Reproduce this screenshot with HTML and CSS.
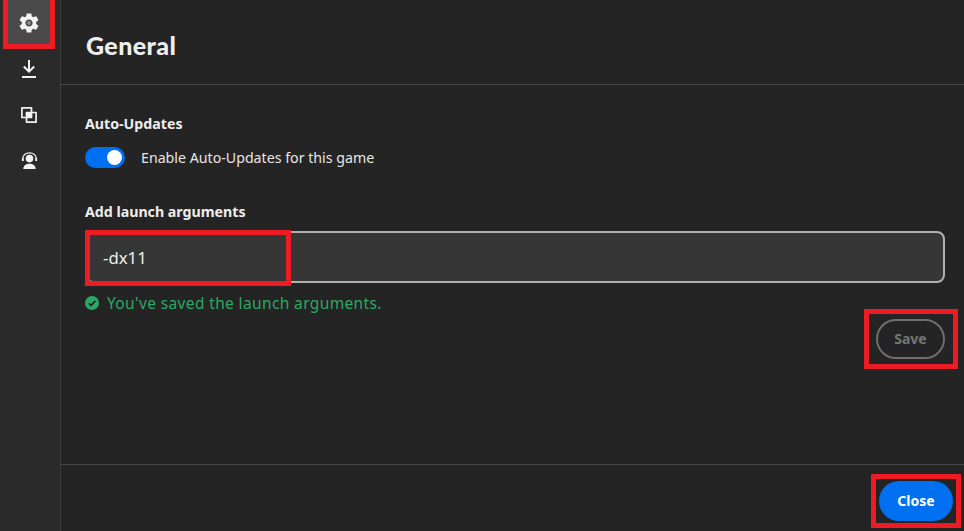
FILE: index.html
```html
<!DOCTYPE html>
<html lang="en">
<head>
<meta charset="utf-8">
<title>General</title>
<link rel="stylesheet" href="styles.css">
</head>
<body>
<div class="app">
  <nav class="sidebar">
    <div class="nav-item nav-item-active">
      <svg class="icon" viewBox="2 2 20 20"><path fill="#f2f2f2" d="M19.140 12.940c.04-.3.06-.61.06-.94 0-.32-.02-.64-.07-.94l2.030-1.580c.18-.14.23-.41.12-.61l-1.920-3.320c-.12-.22-.37-.29-.59-.22l-2.390.96c-.5-.38-1.030-.7-1.620-.94l-.36-2.540c-.04-.24-.24-.41-.48-.41h-3.840c-.24 0-.43.17-.47.41l-.36 2.540c-.59.24-1.130.57-1.620.94l-2.390-.96c-.22-.08-.47 0-.59.22L2.740 8.870c-.12.21-.08.47.12.61l2.030 1.580c-.05.3-.09.63-.09.94s.02.64.07.94l-2.030 1.580c-.18.14-.23.41-.12.61l1.920 3.320c.12.22.37.29.59.22l2.390-.96c.5.38 1.030.7 1.620.94l.36 2.540c.05.24.24.41.48.41h3.840c.24 0 .44-.17.47-.41l.36-2.540c.59-.24 1.130-.56 1.620-.94l2.390.96c.22.08.47 0 .59-.22l1.920-3.320c.12-.22.07-.47-.12-.61l-2.010-1.580zM12 15.600c-1.980 0-3.600-1.620-3.600-3.600s1.620-3.600 3.600-3.600 3.600 1.620 3.600 3.600-1.620 3.600-3.600 3.600z"/><circle cx="12" cy="12" r="2" fill="#8c8c8c"/></svg>
      <span class="mark mark-nav"></span>
    </div>
    <div class="nav-item">
      <svg class="icon" viewBox="0 0 20 20"><path fill="none" stroke="#f2f2f2" stroke-width="2" d="M10 1v11M4.800 7.500 10 12.700l5.200-5.200M3 18h14"/></svg>
    </div>
    <div class="nav-item">
      <svg class="icon icon-layers" viewBox="0 0 16 16"><path fill="none" stroke="#f2f2f2" stroke-width="1.700" stroke-linejoin="round" d="M.9.9h9.600v9.600H.9zM5.500 5.500h9.600v9.600H5.500z"/><path fill="#f2f2f2" d="M5.500 5.500h5v5h-5z"/></svg>
    </div>
    <div class="nav-item">
      <svg class="icon icon-agent" viewBox="0 0 20 20"><path fill="none" stroke="#f2f2f2" stroke-width="1.500" d="M2.800 8.500C3 4.500 6 2 10 2s7 2.500 7.200 6.500"/><circle cx="10" cy="8" r="4" fill="#f2f2f2"/><path fill="#f2f2f2" d="M2 7.500h2v3H2zM16 7.500h2v3h-2zM3.500 19c0-3.500 3-5.500 6.500-5.500s6.500 2 6.500 5.500z"/></svg>
    </div>
  </nav>
  <main class="panel">
    <header class="panel-header"><h1 class="title">General</h1></header>
    <section class="panel-body">
      <h2 class="label">Auto-Updates</h2>
      <div class="toggle-row">
        <span class="toggle"><span class="knob"></span></span>
        <span class="toggle-text">Enable Auto-Updates for this game</span>
      </div>
      <h2 class="label label-args">Add launch arguments</h2>
      <div class="field">
        <span class="field-text">-dx11</span>
        <span class="mark mark-field"></span>
      </div>
      <div class="status">
        <svg class="status-icon" viewBox="0 0 14 14"><circle cx="7" cy="7" r="7" fill="#2ba866"/><path fill="none" stroke="#222" stroke-width="1.600" d="M3.700 7.200l2.300 2.300 4.300-4.600"/></svg>
        <span>You've saved the launch arguments.</span>
      </div>
      <div class="save-row">
        <span class="btn btn-save">Save<span class="mark mark-save"></span></span>
      </div>
    </section>
    <footer class="panel-footer">
      <span class="btn btn-close">Close<span class="mark mark-close"></span></span>
    </footer>
  </main>
</div>
</body>
</html>
```
FILE: styles.css
```css
* { box-sizing: border-box; }
html, body { margin: 0; height: 100%; }
body { background: #242424; color: #f2f2f2; font-family: "Noto Sans", "Open Sans", sans-serif; overflow: hidden; }
.app { display: flex; height: 531px; }
.sidebar { width: 61px; flex: none; background: #2a2a2a; border-right: 1px solid #3d3d3d; display: flex; flex-direction: column; padding: 0 10px 0 8px; }
.nav-item { position: relative; height: 46px; display: flex; align-items: center; justify-content: center; }
.nav-item-active { background: #4a4a4a; height: 44px; margin-bottom: 2px; padding-top: 2px; }
.icon { width: 20px; height: 20px; display: block; }
.icon-layers { width: 16px; height: 16px; }
.icon-agent { width: 19px; height: 19px; margin-top: -1px; }
.panel { flex: 1; display: flex; flex-direction: column; min-width: 0; }
.panel-header { height: 85px; flex: none; border-bottom: 1px solid #444; padding: 28px 25px 0; }
.title { margin: 0; font-family: "Lato", sans-serif; font-weight: 900; font-size: 25px; line-height: 34px; color: #eee; letter-spacing: .4px; }
.panel-body { flex: 1; padding: 29px 19px 0 24px; }
.label { margin: 0; font-size: 14.200px; line-height: 20px; font-weight: 700; color: #eee; }
.label-args { margin-top: 34px; }
.toggle-row { display: flex; align-items: center; gap: 16px; margin-top: 12px; height: 22px; }
.toggle { width: 40px; height: 21px; border-radius: 11px; background: #0070f0; display: flex; align-items: center; justify-content: flex-end; padding-right: 3px; }
.knob { width: 15px; height: 15px; border-radius: 50%; background: #fff; }
.toggle-text { font-size: 14.200px; color: #e6e6e6; }
.field { position: relative; margin-top: 9px; height: 52px; background: #363636; border: 2px solid #b0b0b0; border-radius: 8px; padding-left: 16px; display: flex; align-items: center; }
.field-text { font-size: 16.800px; color: #eee; }
.status { display: flex; align-items: center; gap: 8px; margin-top: 9px; height: 22px; color: #2ba866; font-size: 15.500px; letter-spacing: .37px; }
.status-icon { width: 14px; height: 14px; flex: none; }
.save-row { display: flex; justify-content: flex-end; margin-top: 5px; }
.btn { position: relative; display: flex; align-items: center; justify-content: center; font-size: 14px; font-weight: 700; border-radius: 20px; }
.btn-save { width: 69px; height: 40px; padding-bottom: 2px; border: 2px solid #6e6e6e; color: #757575; }
.panel-footer { height: 67px; flex: none; border-top: 1px solid #444; display: flex; justify-content: flex-end; padding: 16px 11px 0 0; }
.btn-close { width: 74px; height: 40px; padding-bottom: 2px; background: #0070f0; color: #fff; }
.mark { position: absolute; border: 5px solid #ed1c24; pointer-events: none; }
.mark-nav { left: -5px; right: -5px; top: -5px; bottom: -5px; }
.mark-field { left: -2px; top: -3px; width: 206px; height: 56px; }
.mark-save { left: -14px; top: -12px; width: 94px; height: 60px; }
.mark-close { left: -8px; top: -7px; width: 90px; height: 54px; }
```
